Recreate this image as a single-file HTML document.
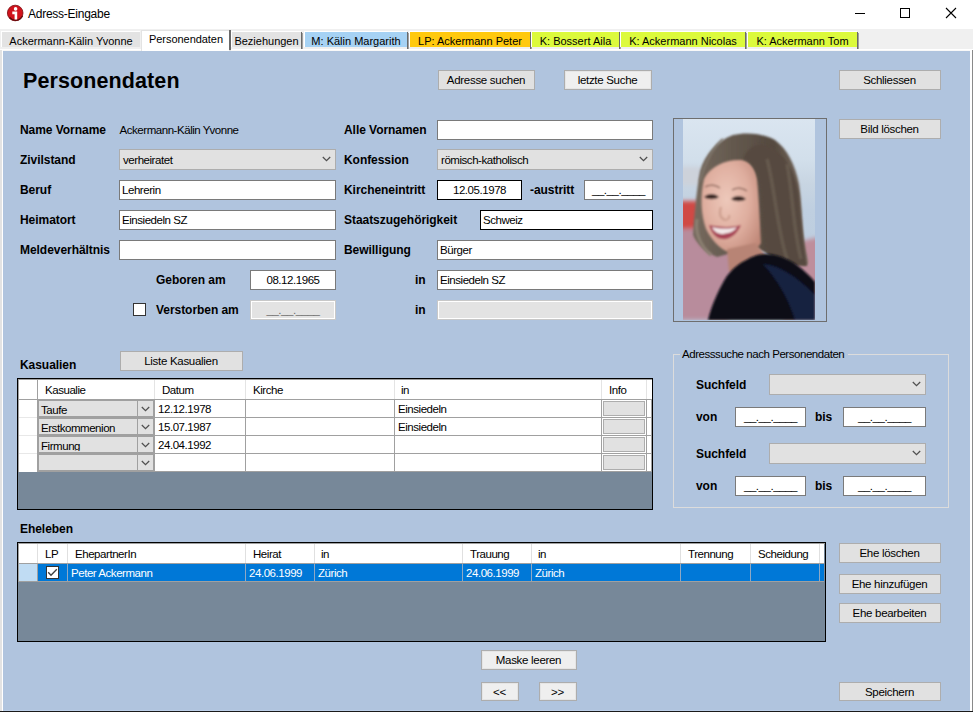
<!DOCTYPE html>
<html><head><meta charset="utf-8"><title>Adress-Eingabe</title>
<style>
html,body{margin:0;padding:0;}
body{width:973px;height:712px;position:relative;overflow:hidden;background:#B0C4DE;font-family:"Liberation Sans",sans-serif;}
.a{position:absolute;}
.t{position:absolute;line-height:0;white-space:nowrap;}
.t span{display:inline-block;line-height:0;vertical-align:baseline;}
svg{display:block;}
</style></head><body>
<div class=a style="left:0px;top:0px;width:973px;height:29px;background:#FFFFFF;"></div>
<svg class=a style="left:6px;top:4px" width="19" height="19" viewBox="0 0 19 19">
<circle cx="9.2" cy="9" r="7.8" fill="#D0121C"/>
<path d="M3.5 13.5 A7.8 7.8 0 0 0 16.5 12" stroke="#4a0808" stroke-width="1.4" fill="none"/>
<circle cx="9.2" cy="9" r="7.8" fill="none" stroke="#7a0c10" stroke-width="0.8"/>
<circle cx="9.6" cy="4.9" r="1.8" fill="#fff"/>
<path d="M6.3 7.6 H11.2 V15.4 H8.6 V10.2 H6.3 Z" fill="#fff"/>
</svg>
<div class=t style="left:28px;top:13.84px;font-size:12px;font-weight:400;letter-spacing:-0.25px;color:#000;"><span>Adress-Eingabe</span></div>
<div class=a style="left:855px;top:13px;width:10px;height:1px;background:#000;"></div>
<div class=a style="left:900px;top:8px;width:10px;height:10px;box-shadow:inset 0 0 0 1px #000;"></div>
<svg class=a style="left:945px;top:7px" width="12" height="12"><path d="M1 1 L11 11 M11 1 L1 11" stroke="#000" stroke-width="1.1"/></svg>
<div class=a style="left:0px;top:29px;width:973px;height:22px;background:#F0F0F0;"></div>
<div class=a style="left:0px;top:49px;width:973px;height:1px;background:#FFFFFF;"></div>
<div class=a style="left:0px;top:50px;width:973px;height:1px;background:#F8F8F8;"></div>
<div class=a style="left:1px;top:31px;width:139px;height:16px;background:#FFFFFF;"></div>
<div class=a style="left:2px;top:32px;width:138px;height:15px;background:#E3E3E3;"></div>
<div class=t style="left:-129.0px;width:400px;text-align:center;top:41.19px;font-size:11px;font-weight:400;letter-spacing:0px;color:#000"><span>Ackermann-Kälin Yvonne</span></div>
<div class=a style="left:231px;top:31px;width:70px;height:16px;background:#FFFFFF;"></div>
<div class=a style="left:232px;top:32px;width:69px;height:15px;background:#E3E3E3;"></div>
<div class=a style="left:301px;top:32px;width:1px;height:17px;background:#6A6A6A;"></div>
<div class=a style="left:302px;top:33px;width:1px;height:16px;background:#A0A0A0;"></div>
<div class=t style="left:66.5px;width:400px;text-align:center;top:41.19px;font-size:11px;font-weight:400;letter-spacing:0px;color:#000"><span>Beziehungen</span></div>
<div class=a style="left:304px;top:31px;width:103px;height:16px;background:#FFFFFF;"></div>
<div class=a style="left:305px;top:32px;width:102px;height:15px;background:#A6D2F4;"></div>
<div class=a style="left:407px;top:32px;width:1px;height:17px;background:#6A6A6A;"></div>
<div class=a style="left:408px;top:33px;width:1px;height:16px;background:#A0A0A0;"></div>
<div class=t style="left:156.0px;width:400px;text-align:center;top:41.19px;font-size:11px;font-weight:400;letter-spacing:0px;color:#000"><span>M: Kälin Margarith</span></div>
<div class=a style="left:409px;top:31px;width:121px;height:16px;background:#FFFFFF;"></div>
<div class=a style="left:410px;top:32px;width:120px;height:15px;background:#FFC90E;"></div>
<div class=a style="left:530px;top:32px;width:1px;height:17px;background:#6A6A6A;"></div>
<div class=a style="left:531px;top:33px;width:1px;height:16px;background:#A0A0A0;"></div>
<div class=t style="left:270.0px;width:400px;text-align:center;top:41.19px;font-size:11px;font-weight:400;letter-spacing:0px;color:#000"><span>LP: Ackermann Peter</span></div>
<div class=a style="left:531px;top:31px;width:88px;height:16px;background:#FFFFFF;"></div>
<div class=a style="left:532px;top:32px;width:87px;height:15px;background:#DCFA3C;"></div>
<div class=a style="left:619px;top:32px;width:1px;height:17px;background:#6A6A6A;"></div>
<div class=a style="left:620px;top:33px;width:1px;height:16px;background:#A0A0A0;"></div>
<div class=t style="left:375.5px;width:400px;text-align:center;top:41.19px;font-size:11px;font-weight:400;letter-spacing:0px;color:#000"><span>K: Bossert Aila</span></div>
<div class=a style="left:620px;top:31px;width:125px;height:16px;background:#FFFFFF;"></div>
<div class=a style="left:621px;top:32px;width:124px;height:15px;background:#DCFA3C;"></div>
<div class=a style="left:745px;top:32px;width:1px;height:17px;background:#6A6A6A;"></div>
<div class=a style="left:746px;top:33px;width:1px;height:16px;background:#A0A0A0;"></div>
<div class=t style="left:483.0px;width:400px;text-align:center;top:41.19px;font-size:11px;font-weight:400;letter-spacing:0px;color:#000"><span>K: Ackermann Nicolas</span></div>
<div class=a style="left:747px;top:31px;width:110px;height:16px;background:#FFFFFF;"></div>
<div class=a style="left:748px;top:32px;width:109px;height:15px;background:#DCFA3C;"></div>
<div class=a style="left:857px;top:32px;width:1px;height:17px;background:#6A6A6A;"></div>
<div class=a style="left:858px;top:33px;width:1px;height:16px;background:#A0A0A0;"></div>
<div class=t style="left:602.5px;width:400px;text-align:center;top:41.19px;font-size:11px;font-weight:400;letter-spacing:0px;color:#000"><span>K: Ackermann Tom</span></div>
<div class=a style="left:141px;top:30px;width:90px;height:21px;background:#E3E3E3;"></div>
<div class=a style="left:142px;top:31px;width:87px;height:20px;background:#FFFFFF;"></div>
<div class=a style="left:229px;top:30px;width:2px;height:20px;background:#6A6A6A;"></div>
<div class=t style="left:-14px;width:400px;text-align:center;top:38.69px;font-size:11px;font-weight:400;letter-spacing:-0.05px;color:#000"><span>Personendaten</span></div>
<div class=a style="left:0px;top:50px;width:3px;height:662px;background:#E3E3E3;"></div>
<div class=a style="left:2px;top:50px;width:1px;height:662px;background:#FFFFFF;"></div>
<div class=a style="left:970px;top:50px;width:3px;height:662px;background:#FFFFFF;"></div>
<div class=a style="left:972px;top:50px;width:1px;height:662px;background:#8A8A8A;"></div>
<div class=a style="left:3px;top:51px;width:967px;height:660px;background:#B0C4DE;"></div>
<div class=a style="left:3px;top:710px;width:967px;height:1px;background:#BCCFE8;"></div>
<div class=a style="left:0px;top:711px;width:973px;height:1px;background:#1A1A1A;"></div>
<div class=t style="left:23px;top:80.55px;font-size:21.5px;font-weight:700;letter-spacing:0.1px;color:#000;"><span>Personendaten</span></div>
<div class=a style="left:438px;top:70px;width:97px;height:20px;background:#E1E1E1;box-shadow:inset 0 0 0 1px #ADADAD;"></div>
<div class=t style="left:286.0px;width:400px;text-align:center;top:80.02px;font-size:11.5px;font-weight:400;letter-spacing:-0.3px;color:#000"><span>Adresse suchen</span></div>
<div class=a style="left:564px;top:70px;width:88px;height:20px;background:#E5E5E5;box-shadow:inset 0 0 0 1px #ADADAD;"></div>
<div class=a style="left:566px;top:72px;width:84px;height:16px;background:#EFEFEF;"></div>
<div class=t style="left:407.5px;width:400px;text-align:center;top:80.02px;font-size:11.5px;font-weight:400;letter-spacing:-0.3px;color:#000"><span>letzte Suche</span></div>
<div class=a style="left:839px;top:70px;width:102px;height:20px;background:#E1E1E1;box-shadow:inset 0 0 0 1px #ADADAD;"></div>
<div class=t style="left:689.5px;width:400px;text-align:center;top:80.02px;font-size:11.5px;font-weight:400;letter-spacing:-0.3px;color:#000"><span>Schliessen</span></div>
<div class=t style="left:20px;top:129.84px;font-size:12px;font-weight:700;letter-spacing:-0.05px;color:#000;"><span>Name Vorname</span></div>
<div class=t style="left:119.5px;top:130.02px;font-size:11.5px;font-weight:400;letter-spacing:-0.45px;color:#000;"><span>Ackermann-Kälin Yvonne</span></div>
<div class=t style="left:20px;top:159.84px;font-size:12px;font-weight:700;letter-spacing:-0.05px;color:#000;"><span>Zivilstand</span></div>
<div class=a style="left:119px;top:149px;width:217px;height:21px;background:#E1E1E1;box-shadow:inset 0 0 0 1px #ADADAD;"></div>
<div class=t style="left:123px;top:160.02px;font-size:11.5px;font-weight:400;letter-spacing:-0.45px;color:#000;"><span>verheiratet</span></div>
<svg class=a style="left:322.0px;top:156.3px" width='10' height='7'><polyline points='0.8,1 4.5,4.7 8.2,1' fill='none' stroke='#505050' stroke-width='1.25'/></svg>
<div class=t style="left:20px;top:189.84px;font-size:12px;font-weight:700;letter-spacing:-0.05px;color:#000;"><span>Beruf</span></div>
<div class=a style="left:119px;top:180px;width:217px;height:20px;background:#FFF;box-shadow:inset 0 0 0 1px #7A7A7A;"></div>
<div class=t style="left:122px;top:190.02px;font-size:11.5px;font-weight:400;letter-spacing:-0.45px;color:#000;"><span>Lehrerin</span></div>
<div class=t style="left:20px;top:219.84px;font-size:12px;font-weight:700;letter-spacing:-0.05px;color:#000;"><span>Heimatort</span></div>
<div class=a style="left:119px;top:210px;width:217px;height:20px;background:#FFF;box-shadow:inset 0 0 0 1px #7A7A7A;"></div>
<div class=t style="left:122px;top:220.02px;font-size:11.5px;font-weight:400;letter-spacing:-0.45px;color:#000;"><span>Einsiedeln SZ</span></div>
<div class=t style="left:20px;top:249.84px;font-size:12px;font-weight:700;letter-spacing:-0.05px;color:#000;"><span>Meldeverhältnis</span></div>
<div class=a style="left:119px;top:240px;width:217px;height:20px;background:#FFF;box-shadow:inset 0 0 0 1px #7A7A7A;"></div>
<div class=t style="left:156px;top:279.84px;font-size:12px;font-weight:700;letter-spacing:-0.05px;color:#000;"><span>Geboren am</span></div>
<div class=a style="left:250px;top:270px;width:86px;height:20px;background:#FFF;box-shadow:inset 0 0 0 1px #7A7A7A;"></div>
<div class=t style="left:93.0px;width:400px;text-align:center;top:280.02px;font-size:11.5px;font-weight:400;letter-spacing:-0.45px;color:#000"><span>08.12.1965</span></div>
<div class=a style="left:133px;top:303px;width:13px;height:13px;background:#FFFFFF;box-shadow:inset 0 0 0 1px #333333;"></div>
<div class=t style="left:156px;top:309.84px;font-size:12px;font-weight:700;letter-spacing:-0.05px;color:#000;"><span>Verstorben am</span></div>
<div class=a style="left:250px;top:300px;width:86px;height:20px;background:#FFFFFF;box-shadow:inset 0 0 0 1px #C8C8C8;"></div>
<div class=a style="left:252px;top:302px;width:82px;height:16px;background:#E3E3E3;"></div>
<div class=t style="left:93px;width:400px;text-align:center;top:310.02px;font-size:11.5px;font-weight:400;letter-spacing:-0.45px;color:#6D6D6D"><span>__.__.____</span></div>
<div class=t style="left:344px;top:129.84px;font-size:12px;font-weight:700;letter-spacing:-0.05px;color:#000;"><span>Alle Vornamen</span></div>
<div class=a style="left:437px;top:120px;width:216px;height:20px;background:#FFF;box-shadow:inset 0 0 0 1px #7A7A7A;"></div>
<div class=t style="left:344px;top:159.84px;font-size:12px;font-weight:700;letter-spacing:-0.05px;color:#000;"><span>Konfession</span></div>
<div class=a style="left:437px;top:149px;width:216px;height:21px;background:#E1E1E1;box-shadow:inset 0 0 0 1px #ADADAD;"></div>
<div class=t style="left:441px;top:160.02px;font-size:11.5px;font-weight:400;letter-spacing:-0.45px;color:#000;"><span>römisch-katholisch</span></div>
<svg class=a style="left:639.0px;top:156.3px" width='10' height='7'><polyline points='0.8,1 4.5,4.7 8.2,1' fill='none' stroke='#505050' stroke-width='1.25'/></svg>
<div class=t style="left:344px;top:189.84px;font-size:12px;font-weight:700;letter-spacing:-0.05px;color:#000;"><span>Kircheneintritt</span></div>
<div class=a style="left:437px;top:180px;width:85px;height:20px;background:#FFF;box-shadow:inset 0 0 0 1px #000;"></div>
<div class=t style="left:279.5px;width:400px;text-align:center;top:190.02px;font-size:11.5px;font-weight:400;letter-spacing:-0.45px;color:#000"><span>12.05.1978</span></div>
<div class=t style="left:530px;top:189.84px;font-size:12px;font-weight:700;letter-spacing:-0.05px;color:#000;"><span>-austritt</span></div>
<div class=a style="left:584px;top:180px;width:69px;height:20px;background:#FFF;box-shadow:inset 0 0 0 1px #7A7A7A;"></div>
<div class=t style="left:418.5px;width:400px;text-align:center;top:190.02px;font-size:11.5px;font-weight:400;letter-spacing:-0.45px;color:#000"><span>__.__.____</span></div>
<div class=t style="left:344px;top:219.84px;font-size:12px;font-weight:700;letter-spacing:-0.05px;color:#000;"><span>Staatszugehörigkeit</span></div>
<div class=a style="left:480px;top:210px;width:173px;height:20px;background:#FFF;box-shadow:inset 0 0 0 1px #000;"></div>
<div class=t style="left:483px;top:220.02px;font-size:11.5px;font-weight:400;letter-spacing:-0.45px;color:#000;"><span>Schweiz</span></div>
<div class=t style="left:344px;top:249.84px;font-size:12px;font-weight:700;letter-spacing:-0.05px;color:#000;"><span>Bewilligung</span></div>
<div class=a style="left:437px;top:240px;width:216px;height:20px;background:#FFF;box-shadow:inset 0 0 0 1px #7A7A7A;"></div>
<div class=t style="left:440px;top:250.02px;font-size:11.5px;font-weight:400;letter-spacing:-0.45px;color:#000;"><span>Bürger</span></div>
<div class=t style="left:415px;top:279.84px;font-size:12px;font-weight:700;letter-spacing:-0.05px;color:#000;"><span>in</span></div>
<div class=a style="left:437px;top:270px;width:216px;height:20px;background:#FFF;box-shadow:inset 0 0 0 1px #7A7A7A;"></div>
<div class=t style="left:440px;top:280.02px;font-size:11.5px;font-weight:400;letter-spacing:-0.45px;color:#000;"><span>Einsiedeln SZ</span></div>
<div class=t style="left:415px;top:309.84px;font-size:12px;font-weight:700;letter-spacing:-0.05px;color:#000;"><span>in</span></div>
<div class=a style="left:437px;top:300px;width:216px;height:20px;background:#FFFFFF;box-shadow:inset 0 0 0 1px #C8C8C8;"></div>
<div class=a style="left:439px;top:302px;width:212px;height:16px;background:#E3E3E3;"></div>
<div class=a style="left:673px;top:118px;width:154px;height:204px;box-shadow:inset 0 0 0 1px #6E6E6E;"></div>
<svg class=a style="left:683px;top:119px" width="132" height="201" viewBox="0 0 132 201">
<defs>
<filter id="bl" x="-20%" y="-20%" width="140%" height="140%"><feGaussianBlur stdDeviation="2"/></filter>
<filter id="bl1" x="-20%" y="-20%" width="140%" height="140%"><feGaussianBlur stdDeviation="1.2"/></filter>
<filter id="bl2" x="-20%" y="-20%" width="140%" height="140%"><feGaussianBlur stdDeviation="1"/></filter>
<linearGradient id="bg" x1="0" y1="0" x2="0" y2="1">
<stop offset="0" stop-color="#DAE5F0"/><stop offset="0.2" stop-color="#D2DFEB"/><stop offset="0.32" stop-color="#C8D5E2"/><stop offset="0.45" stop-color="#BFCFE0"/><stop offset="1" stop-color="#BACBDD"/>
</linearGradient>
<linearGradient id="hair" x1="0" y1="0" x2="1" y2="0">
<stop offset="0" stop-color="#766A5E"/><stop offset="0.3" stop-color="#665B50"/><stop offset="0.7" stop-color="#54493F"/><stop offset="1" stop-color="#7E7064"/>
</linearGradient>
<radialGradient id="skin" cx="0.42" cy="0.42" r="0.7">
<stop offset="0" stop-color="#EDC8BA"/><stop offset="0.55" stop-color="#DFAE9F"/><stop offset="1" stop-color="#C08878"/>
</radialGradient>
</defs>
<rect width="132" height="201" fill="url(#bg)"/>
<g filter="url(#bl)">
<rect x="-4" y="48" width="22" height="18" fill="#CDD2DA"/>
<rect x="-4" y="82" width="20" height="30" fill="#D04844"/>
<path d="M-4 110 L40 108 L60 150 L45 201 L-4 201 Z" fill="#B88C9C"/>
<path d="M110 124 L136 118 L136 201 L100 201 Z" fill="#BE8E9C"/>
</g>
<g filter="url(#bl1)">
<path d="M17 52 C22 35 34 22 50 16 C62 13 80 14 92 21 C104 30 112 45 116 65 C119 85 119 110 122 128 C124 138 126 143 124 146 C112 146 98 142 88 136 L70 128 L34 138 C24 134 14 126 10 116 C11 100 13 75 17 52 Z" fill="url(#hair)"/>
</g>
<g filter="url(#bl2)">
<path d="M21 60 C27 47 44 40 58 41 C66 42 72 48 74 60 C76 80 77 105 78 124 C74 132 62 136 52 135 C40 133 30 124 23 110 C18 96 17 78 21 60 Z" fill="url(#skin)"/>
<path d="M44 130 L72 124 L86 140 L60 158 L46 152 Z" fill="#B88474"/>
<path d="M22 68 C27 65 33 66 37 69" stroke="#8A6458" stroke-width="1.4" fill="none"/>
<path d="M49 71 C54 68 60 69 64 72" stroke="#8A6458" stroke-width="1.4" fill="none"/>
<path d="M21 78 C25 74 32 74 36 78 C32 81 25 81 21 78 Z" fill="#3E2C28"/>
<path d="M48 80 C52 76 59 76 63 80 C59 83 52 83 48 80 Z" fill="#3E2C28"/>
<path d="M38 88 C36 94 37 99 42 101 C45 101 47 99 46 96" stroke="#CFA090" stroke-width="2.2" fill="none"/>
<path d="M26 106 C36 108 48 109 58 106 C54 116 46 121 39 120 C32 119 28 113 26 106 Z" fill="#A84456"/>
<path d="M29 108 C37 110 47 110 54 108 C51 113 44 115 38 115 C33 114 30 111 29 108 Z" fill="#F2E8E8"/>
</g>
<g filter="url(#bl1)">
<path d="M60 40 C70 42 76 55 78 72 C80 95 80 120 84 134 C92 142 108 147 124 147 C121 128 118 100 116 75 C112 50 100 32 82 26 C72 24 64 30 60 40 Z" fill="#564A40"/>
<path d="M84 40 C92 70 94 110 104 140" stroke="#675B4F" stroke-width="3" fill="none"/>
<path d="M104 45 C110 75 110 110 118 140" stroke="#685C50" stroke-width="3" fill="none"/>
<path d="M40 20 C30 28 22 45 17 62" stroke="#7E756A" stroke-width="2" fill="none"/>
<path d="M14 100 C12 112 16 126 28 136" stroke="#8C8072" stroke-width="3" fill="none"/>
</g>
<g filter="url(#bl2)">
<path d="M25 201 C28 188 34 174 42 160 C48 150 58 142 74 136 C88 133 102 138 114 146 C122 152 128 158 132 163 L132 201 Z" fill="#0B0F19"/>
<path d="M80 145 C96 146 114 158 132 176 L132 201 L112 201 C106 180 94 160 80 145 Z" fill="#172340"/>
</g>
</svg>

<div class=a style="left:839px;top:119px;width:102px;height:20px;background:#E1E1E1;box-shadow:inset 0 0 0 1px #ADADAD;"></div>
<div class=t style="left:689.5px;width:400px;text-align:center;top:129.02px;font-size:11.5px;font-weight:400;letter-spacing:-0.3px;color:#000"><span>Bild löschen</span></div>
<div class=t style="left:20px;top:364.84px;font-size:12px;font-weight:700;letter-spacing:-0.05px;color:#000;"><span>Kasualien</span></div>
<div class=a style="left:120px;top:351px;width:123px;height:20px;background:#E1E1E1;box-shadow:inset 0 0 0 1px #ADADAD;"></div>
<div class=t style="left:-19.0px;width:400px;text-align:center;top:361.02px;font-size:11.5px;font-weight:400;letter-spacing:-0.3px;color:#000"><span>Liste Kasualien</span></div>
<div class=a style="left:17px;top:378px;width:636px;height:132px;background:#778899;box-shadow:inset 0 0 0 1px #000;"></div>
<div class=a style="left:18px;top:379px;width:634px;height:1px;background:#A0A0A0;"></div>
<div class=a style="left:18px;top:379px;width:1px;height:93px;background:#A0A0A0;"></div>
<div class=a style="left:19px;top:380px;width:633px;height:91px;background:#FFFFFF;"></div>
<div class=a style="left:19px;top:399px;width:633px;height:1px;background:#A0A0A0;"></div>
<div class=a style="left:651px;top:400px;width:1px;height:71px;background:#A0A0A0;"></div>
<div class=a style="left:19px;top:417px;width:633px;height:1px;background:#A0A0A0;"></div>
<div class=a style="left:19px;top:435px;width:633px;height:1px;background:#A0A0A0;"></div>
<div class=a style="left:19px;top:453px;width:633px;height:1px;background:#A0A0A0;"></div>
<div class=a style="left:37px;top:471px;width:615px;height:1px;background:#A0A0A0;"></div>
<div class=a style="left:19px;top:471px;width:18px;height:1px;background:#FFFFFF;"></div>
<div class=a style="left:19px;top:417px;width:18px;height:1px;background:#E8E8E8;"></div>
<div class=a style="left:19px;top:435px;width:18px;height:1px;background:#E8E8E8;"></div>
<div class=a style="left:19px;top:453px;width:18px;height:1px;background:#E8E8E8;"></div>
<div class=a style="left:37px;top:380px;width:1px;height:91px;background:#A0A0A0;"></div>
<div class=a style="left:154px;top:380px;width:1px;height:91px;background:#A0A0A0;"></div>
<div class=a style="left:245px;top:380px;width:1px;height:91px;background:#A0A0A0;"></div>
<div class=a style="left:394px;top:380px;width:1px;height:91px;background:#A0A0A0;"></div>
<div class=a style="left:601px;top:380px;width:1px;height:91px;background:#A0A0A0;"></div>
<div class=a style="left:646px;top:380px;width:1px;height:91px;background:#A0A0A0;"></div>
<div class=a style="left:154px;top:380px;width:1px;height:19px;background:#E4E4E4;"></div>
<div class=a style="left:245px;top:380px;width:1px;height:19px;background:#E4E4E4;"></div>
<div class=a style="left:394px;top:380px;width:1px;height:19px;background:#E4E4E4;"></div>
<div class=a style="left:601px;top:380px;width:1px;height:19px;background:#E4E4E4;"></div>
<div class=a style="left:646px;top:380px;width:1px;height:19px;background:#E4E4E4;"></div>
<div class=t style="left:45px;top:390.02px;font-size:11.5px;font-weight:400;letter-spacing:-0.45px;color:#000;"><span>Kasualie</span></div>
<div class=t style="left:162px;top:390.02px;font-size:11.5px;font-weight:400;letter-spacing:-0.45px;color:#000;"><span>Datum</span></div>
<div class=t style="left:253px;top:390.02px;font-size:11.5px;font-weight:400;letter-spacing:-0.45px;color:#000;"><span>Kirche</span></div>
<div class=t style="left:401px;top:390.02px;font-size:11.5px;font-weight:400;letter-spacing:-0.45px;color:#000;"><span>in</span></div>
<div class=t style="left:609px;top:390.02px;font-size:11.5px;font-weight:400;letter-spacing:-0.45px;color:#000;"><span>Info</span></div>
<div class=a style="left:38px;top:400px;width:116px;height:17px;background:#E1E1E1;box-shadow:inset 0 0 0 1px #A0A0A0;"></div>
<div class=a style="left:137px;top:401px;width:1px;height:15px;background:#A0A0A0;"></div>
<svg class=a style="left:140.5px;top:406px" width='10' height='7'><polyline points='0.8,1 4.5,4.7 8.2,1' fill='none' stroke='#505050' stroke-width='1.25'/></svg>
<div class=t style="left:41px;top:410.02px;font-size:11.5px;font-weight:400;letter-spacing:-0.45px;color:#000;"><span>Taufe</span></div>
<div class=a style="left:39px;top:415px;width:98px;height:1px;background:#E1E1E1;"></div>
<div class=a style="left:38px;top:416px;width:116px;height:1px;background:#A0A0A0;"></div>
<div class=t style="left:158px;top:409.02px;font-size:11.5px;font-weight:400;letter-spacing:-0.45px;color:#000;"><span>12.12.1978</span></div>
<div class=t style="left:398px;top:409.02px;font-size:11.5px;font-weight:400;letter-spacing:-0.45px;color:#000;"><span>Einsiedeln</span></div>
<div class=a style="left:603px;top:401px;width:42px;height:15px;background:#E1E1E1;box-shadow:inset 0 0 0 1px #ADADAD;"></div>
<div class=a style="left:38px;top:418px;width:116px;height:17px;background:#E1E1E1;box-shadow:inset 0 0 0 1px #A0A0A0;"></div>
<div class=a style="left:137px;top:419px;width:1px;height:15px;background:#A0A0A0;"></div>
<svg class=a style="left:140.5px;top:424px" width='10' height='7'><polyline points='0.8,1 4.5,4.7 8.2,1' fill='none' stroke='#505050' stroke-width='1.25'/></svg>
<div class=t style="left:41px;top:428.02px;font-size:11.5px;font-weight:400;letter-spacing:-0.45px;color:#000;"><span>Erstkommenion</span></div>
<div class=a style="left:39px;top:433px;width:98px;height:1px;background:#E1E1E1;"></div>
<div class=a style="left:38px;top:434px;width:116px;height:1px;background:#A0A0A0;"></div>
<div class=t style="left:158px;top:427.02px;font-size:11.5px;font-weight:400;letter-spacing:-0.45px;color:#000;"><span>15.07.1987</span></div>
<div class=t style="left:398px;top:427.02px;font-size:11.5px;font-weight:400;letter-spacing:-0.45px;color:#000;"><span>Einsiedeln</span></div>
<div class=a style="left:603px;top:419px;width:42px;height:15px;background:#E1E1E1;box-shadow:inset 0 0 0 1px #ADADAD;"></div>
<div class=a style="left:38px;top:436px;width:116px;height:17px;background:#E1E1E1;box-shadow:inset 0 0 0 1px #A0A0A0;"></div>
<div class=a style="left:137px;top:437px;width:1px;height:15px;background:#A0A0A0;"></div>
<svg class=a style="left:140.5px;top:442px" width='10' height='7'><polyline points='0.8,1 4.5,4.7 8.2,1' fill='none' stroke='#505050' stroke-width='1.25'/></svg>
<div class=t style="left:41px;top:446.02px;font-size:11.5px;font-weight:400;letter-spacing:-0.45px;color:#000;"><span>Firmung</span></div>
<div class=a style="left:39px;top:451px;width:98px;height:1px;background:#E1E1E1;"></div>
<div class=a style="left:38px;top:452px;width:116px;height:1px;background:#A0A0A0;"></div>
<div class=t style="left:158px;top:445.02px;font-size:11.5px;font-weight:400;letter-spacing:-0.45px;color:#000;"><span>24.04.1992</span></div>
<div class=a style="left:603px;top:437px;width:42px;height:15px;background:#E1E1E1;box-shadow:inset 0 0 0 1px #ADADAD;"></div>
<div class=a style="left:38px;top:454px;width:116px;height:17px;background:#E1E1E1;box-shadow:inset 0 0 0 1px #A0A0A0;"></div>
<div class=a style="left:137px;top:455px;width:1px;height:15px;background:#A0A0A0;"></div>
<svg class=a style="left:140.5px;top:460px" width='10' height='7'><polyline points='0.8,1 4.5,4.7 8.2,1' fill='none' stroke='#505050' stroke-width='1.25'/></svg>
<div class=a style="left:39px;top:469px;width:98px;height:1px;background:#E1E1E1;"></div>
<div class=a style="left:38px;top:470px;width:116px;height:1px;background:#A0A0A0;"></div>
<div class=a style="left:603px;top:455px;width:42px;height:15px;background:#E1E1E1;box-shadow:inset 0 0 0 1px #ADADAD;"></div>
<div class=a style="left:673px;top:354px;width:276px;height:154px;box-shadow:inset 0 0 0 1px #DCDCDC;"></div>
<div class=a style="left:680px;top:350px;width:168px;height:10px;background:#B0C4DE;"></div>
<div class=t style="left:682px;top:354.02px;font-size:11.5px;font-weight:400;letter-spacing:-0.45px;color:#000;"><span>Adresssuche nach Personendaten</span></div>
<div class=t style="left:696px;top:384.84px;font-size:12px;font-weight:700;letter-spacing:-0.05px;color:#000;"><span>Suchfeld</span></div>
<div class=a style="left:769px;top:374px;width:157px;height:21px;background:#E1E1E1;box-shadow:inset 0 0 0 1px #ADADAD;"></div>
<svg class=a style="left:912.0px;top:381.3px" width='10' height='7'><polyline points='0.8,1 4.5,4.7 8.2,1' fill='none' stroke='#505050' stroke-width='1.25'/></svg>
<div class=t style="left:696px;top:416.84px;font-size:12px;font-weight:700;letter-spacing:-0.05px;color:#000;"><span>von</span></div>
<div class=a style="left:735px;top:407px;width:71px;height:20px;background:#FFF;box-shadow:inset 0 0 0 1px #7A7A7A;"></div>
<div class=t style="left:570.5px;width:400px;text-align:center;top:417.02px;font-size:11.5px;font-weight:400;letter-spacing:-0.45px;color:#000"><span>__.__.____</span></div>
<div class=t style="left:815px;top:416.84px;font-size:12px;font-weight:700;letter-spacing:-0.05px;color:#000;"><span>bis</span></div>
<div class=a style="left:843px;top:407px;width:83px;height:20px;background:#FFF;box-shadow:inset 0 0 0 1px #7A7A7A;"></div>
<div class=t style="left:684.5px;width:400px;text-align:center;top:417.02px;font-size:11.5px;font-weight:400;letter-spacing:-0.45px;color:#000"><span>__.__.____</span></div>
<div class=t style="left:696px;top:453.84px;font-size:12px;font-weight:700;letter-spacing:-0.05px;color:#000;"><span>Suchfeld</span></div>
<div class=a style="left:769px;top:443px;width:157px;height:21px;background:#E1E1E1;box-shadow:inset 0 0 0 1px #ADADAD;"></div>
<svg class=a style="left:912.0px;top:450.3px" width='10' height='7'><polyline points='0.8,1 4.5,4.7 8.2,1' fill='none' stroke='#505050' stroke-width='1.25'/></svg>
<div class=t style="left:696px;top:485.84px;font-size:12px;font-weight:700;letter-spacing:-0.05px;color:#000;"><span>von</span></div>
<div class=a style="left:735px;top:476px;width:71px;height:20px;background:#FFF;box-shadow:inset 0 0 0 1px #7A7A7A;"></div>
<div class=t style="left:570.5px;width:400px;text-align:center;top:486.02px;font-size:11.5px;font-weight:400;letter-spacing:-0.45px;color:#000"><span>__.__.____</span></div>
<div class=t style="left:815px;top:485.84px;font-size:12px;font-weight:700;letter-spacing:-0.05px;color:#000;"><span>bis</span></div>
<div class=a style="left:843px;top:476px;width:83px;height:20px;background:#FFF;box-shadow:inset 0 0 0 1px #7A7A7A;"></div>
<div class=t style="left:684.5px;width:400px;text-align:center;top:486.02px;font-size:11.5px;font-weight:400;letter-spacing:-0.45px;color:#000"><span>__.__.____</span></div>
<div class=t style="left:20px;top:528.84px;font-size:12px;font-weight:700;letter-spacing:-0.05px;color:#000;"><span>Eheleben</span></div>
<div class=a style="left:17px;top:542px;width:809px;height:100px;background:#778899;box-shadow:inset 0 0 0 1px #000;"></div>
<div class=a style="left:18px;top:543px;width:807px;height:1px;background:#A0A0A0;"></div>
<div class=a style="left:18px;top:543px;width:1px;height:39px;background:#A0A0A0;"></div>
<div class=a style="left:19px;top:544px;width:805px;height:37px;background:#FFFFFF;"></div>
<div class=a style="left:19px;top:564px;width:18px;height:17px;background:#C0DCF3;"></div>
<div class=a style="left:37px;top:564px;width:787px;height:17px;background:#0078D7;"></div>
<div class=a style="left:19px;top:581px;width:805px;height:1px;background:#A0A0A0;"></div>
<div class=a style="left:37px;top:544px;width:1px;height:19px;background:#E0E0E0;"></div>
<div class=a style="left:67px;top:544px;width:1px;height:19px;background:#E0E0E0;"></div>
<div class=a style="left:245px;top:544px;width:1px;height:19px;background:#E0E0E0;"></div>
<div class=a style="left:314px;top:544px;width:1px;height:19px;background:#E0E0E0;"></div>
<div class=a style="left:462px;top:544px;width:1px;height:19px;background:#E0E0E0;"></div>
<div class=a style="left:531px;top:544px;width:1px;height:19px;background:#E0E0E0;"></div>
<div class=a style="left:680px;top:544px;width:1px;height:19px;background:#E0E0E0;"></div>
<div class=a style="left:750px;top:544px;width:1px;height:19px;background:#E0E0E0;"></div>
<div class=a style="left:819px;top:544px;width:1px;height:19px;background:#E0E0E0;"></div>
<div class=a style="left:37px;top:564px;width:1px;height:17px;background:#A0A0A0;"></div>
<div class=a style="left:67px;top:564px;width:1px;height:17px;background:#8FA8C4;"></div>
<div class=a style="left:245px;top:564px;width:1px;height:17px;background:#8FA8C4;"></div>
<div class=a style="left:314px;top:564px;width:1px;height:17px;background:#8FA8C4;"></div>
<div class=a style="left:462px;top:564px;width:1px;height:17px;background:#8FA8C4;"></div>
<div class=a style="left:531px;top:564px;width:1px;height:17px;background:#8FA8C4;"></div>
<div class=a style="left:680px;top:564px;width:1px;height:17px;background:#8FA8C4;"></div>
<div class=a style="left:750px;top:564px;width:1px;height:17px;background:#8FA8C4;"></div>
<div class=a style="left:819px;top:564px;width:1px;height:17px;background:#8FA8C4;"></div>
<div class=a style="left:19px;top:563px;width:805px;height:1px;background:#A0A0A0;"></div>
<div class=t style="left:45px;top:554.02px;font-size:11.5px;font-weight:400;letter-spacing:-0.45px;color:#000;"><span>LP</span></div>
<div class=t style="left:75px;top:554.02px;font-size:11.5px;font-weight:400;letter-spacing:-0.45px;color:#000;"><span>EhepartnerIn</span></div>
<div class=t style="left:253px;top:554.02px;font-size:11.5px;font-weight:400;letter-spacing:-0.45px;color:#000;"><span>Heirat</span></div>
<div class=t style="left:321px;top:554.02px;font-size:11.5px;font-weight:400;letter-spacing:-0.45px;color:#000;"><span>in</span></div>
<div class=t style="left:470px;top:554.02px;font-size:11.5px;font-weight:400;letter-spacing:-0.45px;color:#000;"><span>Trauung</span></div>
<div class=t style="left:538px;top:554.02px;font-size:11.5px;font-weight:400;letter-spacing:-0.45px;color:#000;"><span>in</span></div>
<div class=t style="left:688px;top:554.02px;font-size:11.5px;font-weight:400;letter-spacing:-0.45px;color:#000;"><span>Trennung</span></div>
<div class=t style="left:758px;top:554.02px;font-size:11.5px;font-weight:400;letter-spacing:-0.45px;color:#000;"><span>Scheidung</span></div>
<div class=a style="left:46px;top:566px;width:13px;height:13px;background:#FFFFFF;box-shadow:inset 0 0 0 1px #333333;"></div>
<svg class=a style="left:46px;top:566px" width="13" height="13"><polyline points="2.2,6.2 5,9.2 10.8,3.2" fill="none" stroke="#404040" stroke-width="1.35"/></svg>
<div class=t style="left:71px;top:573.02px;font-size:11.5px;font-weight:400;letter-spacing:-0.45px;color:#FFFFFF;"><span>Peter Ackermann</span></div>
<div class=t style="left:249px;top:573.02px;font-size:11.5px;font-weight:400;letter-spacing:-0.45px;color:#FFFFFF;"><span>24.06.1999</span></div>
<div class=t style="left:318px;top:573.02px;font-size:11.5px;font-weight:400;letter-spacing:-0.45px;color:#FFFFFF;"><span>Zürich</span></div>
<div class=t style="left:466px;top:573.02px;font-size:11.5px;font-weight:400;letter-spacing:-0.45px;color:#FFFFFF;"><span>24.06.1999</span></div>
<div class=t style="left:535px;top:573.02px;font-size:11.5px;font-weight:400;letter-spacing:-0.45px;color:#FFFFFF;"><span>Zürich</span></div>
<div class=a style="left:839px;top:543px;width:102px;height:20px;background:#E1E1E1;box-shadow:inset 0 0 0 1px #ADADAD;"></div>
<div class=t style="left:689.5px;width:400px;text-align:center;top:553.02px;font-size:11.5px;font-weight:400;letter-spacing:-0.3px;color:#000"><span>Ehe löschen</span></div>
<div class=a style="left:839px;top:574px;width:102px;height:20px;background:#E1E1E1;box-shadow:inset 0 0 0 1px #ADADAD;"></div>
<div class=t style="left:689.5px;width:400px;text-align:center;top:584.02px;font-size:11.5px;font-weight:400;letter-spacing:-0.3px;color:#000"><span>Ehe hinzufügen</span></div>
<div class=a style="left:839px;top:603px;width:102px;height:20px;background:#E1E1E1;box-shadow:inset 0 0 0 1px #ADADAD;"></div>
<div class=t style="left:689.5px;width:400px;text-align:center;top:613.02px;font-size:11.5px;font-weight:400;letter-spacing:-0.3px;color:#000"><span>Ehe bearbeiten</span></div>
<div class=a style="left:481px;top:650px;width:96px;height:20px;background:#E5E5E5;box-shadow:inset 0 0 0 1px #ADADAD;"></div>
<div class=a style="left:483px;top:652px;width:92px;height:16px;background:#EFEFEF;"></div>
<div class=t style="left:328.5px;width:400px;text-align:center;top:660.02px;font-size:11.5px;font-weight:400;letter-spacing:-0.3px;color:#000"><span>Maske leeren</span></div>
<div class=a style="left:481px;top:682px;width:38px;height:19px;background:#E5E5E5;box-shadow:inset 0 0 0 1px #ADADAD;"></div>
<div class=a style="left:483px;top:684px;width:34px;height:15px;background:#EFEFEF;"></div>
<div class=t style="left:299.5px;width:400px;text-align:center;top:692.02px;font-size:11.5px;font-weight:400;letter-spacing:-0.3px;color:#000"><span>&lt;&lt;</span></div>
<div class=a style="left:539px;top:682px;width:38px;height:19px;background:#E5E5E5;box-shadow:inset 0 0 0 1px #ADADAD;"></div>
<div class=a style="left:541px;top:684px;width:34px;height:15px;background:#EFEFEF;"></div>
<div class=t style="left:357.5px;width:400px;text-align:center;top:692.02px;font-size:11.5px;font-weight:400;letter-spacing:-0.3px;color:#000"><span>&gt;&gt;</span></div>
<div class=a style="left:839px;top:682px;width:102px;height:19px;background:#E1E1E1;box-shadow:inset 0 0 0 1px #ADADAD;"></div>
<div class=t style="left:689.5px;width:400px;text-align:center;top:692.02px;font-size:11.5px;font-weight:400;letter-spacing:-0.3px;color:#000"><span>Speichern</span></div>
</body></html>
